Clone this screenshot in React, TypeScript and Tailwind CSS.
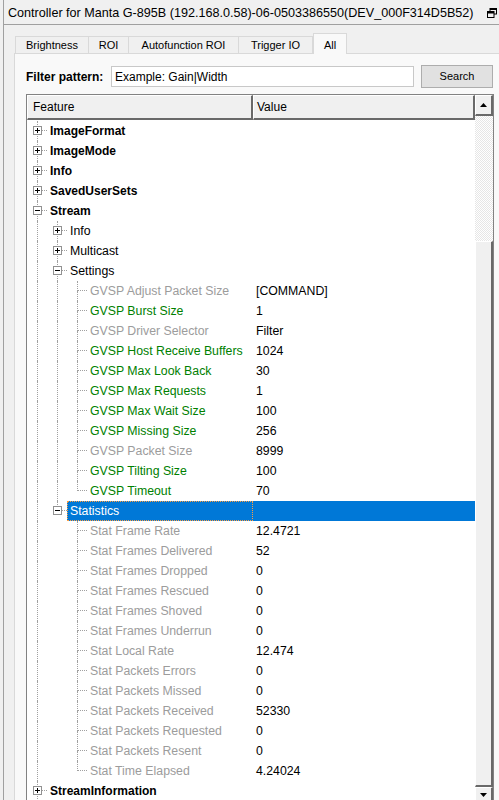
type Row = {
  label: string
  value?: string
  level: number
  group?: boolean
  open?: boolean
  last?: boolean
  guides: boolean[]
  tone: "bold" | "plain" | "green" | "gray"
  selected?: boolean
}

const gvsp: [string, string, boolean][] = [
  ["GVSP Adjust Packet Size", "[COMMAND]", false],
  ["GVSP Burst Size", "1", true],
  ["GVSP Driver Selector", "Filter", false],
  ["GVSP Host Receive Buffers", "1024", true],
  ["GVSP Max Look Back", "30", true],
  ["GVSP Max Requests", "1", true],
  ["GVSP Max Wait Size", "100", true],
  ["GVSP Missing Size", "256", true],
  ["GVSP Packet Size", "8999", false],
  ["GVSP Tilting Size", "100", true],
  ["GVSP Timeout", "70", true],
]

const stats: [string, string][] = [
  ["Stat Frame Rate", "12.4721"],
  ["Stat Frames Delivered", "52"],
  ["Stat Frames Dropped", "0"],
  ["Stat Frames Rescued", "0"],
  ["Stat Frames Shoved", "0"],
  ["Stat Frames Underrun", "0"],
  ["Stat Local Rate", "12.474"],
  ["Stat Packets Errors", "0"],
  ["Stat Packets Missed", "0"],
  ["Stat Packets Received", "52330"],
  ["Stat Packets Requested", "0"],
  ["Stat Packets Resent", "0"],
  ["Stat Time Elapsed", "4.24024"],
]

const rows: Row[] = [
  { label: "ImageFormat", level: 0, group: true, guides: [], tone: "bold" },
  { label: "ImageMode", level: 0, group: true, guides: [], tone: "bold" },
  { label: "Info", level: 0, group: true, guides: [], tone: "bold" },
  { label: "SavedUserSets", level: 0, group: true, guides: [], tone: "bold" },
  { label: "Stream", level: 0, group: true, open: true, guides: [], tone: "bold" },
  { label: "Info", level: 1, group: true, guides: [true], tone: "plain" },
  { label: "Multicast", level: 1, group: true, guides: [true], tone: "plain" },
  { label: "Settings", level: 1, group: true, open: true, guides: [true], tone: "plain" },
  ...gvsp.map(([label, value, on], i) => ({
    label,
    value,
    level: 2,
    last: i === gvsp.length - 1,
    guides: [true, true],
    tone: (on ? "green" : "gray") as Row["tone"],
  })),
  { label: "Statistics", level: 1, group: true, open: true, last: true, guides: [true], tone: "plain", selected: true },
  ...stats.map(([label, value], i) => ({
    label,
    value,
    level: 2,
    last: i === stats.length - 1,
    guides: [true, false],
    tone: "gray" as Row["tone"],
  })),
  { label: "StreamInformation", level: 0, group: true, guides: [], tone: "bold" },
]

const toneClass = {
  bold: "font-bold text-black text-[12px]",
  plain: "text-black",
  green: "text-[#008000]",
  gray: "text-[#9c9c9c]",
}

function ExpandBox({ open }: { open?: boolean }) {
  return (
    <svg className="absolute left-[6px] top-[5px]" width="9" height="9" viewBox="0 0 9 9">
      <rect x="0.5" y="0.5" width="8" height="8" fill="#fff" stroke="#919191" />
      <path d="M2 4.5h5" stroke="#000" />
      {!open && <path d="M4.5 2v5" stroke="#000" />}
    </svg>
  )
}

function Connector({ row }: { row: Row }) {
  return (
    <div className="relative h-[20px] w-[20px] shrink-0">
      <span className="absolute left-[10px] top-0 h-[10px] border-l border-dotted border-[#a0a0a0]" />
      {!row.last && (
        <span className="absolute left-[10px] top-[10px] h-[10px] border-l border-dotted border-[#a0a0a0]" />
      )}
      <span className="absolute left-[11px] top-[9px] w-[9px] border-t border-dotted border-[#a0a0a0]" />
      {row.group && <ExpandBox open={row.open} />}
    </div>
  )
}

function TreeRow({ row }: { row: Row }) {
  return (
    <div className="flex h-[20px] items-center text-[12.3px]">
      <div className="flex h-full w-[226px] shrink-0">
        {row.guides.map((g, i) => (
          <div key={i} className="relative h-[20px] w-[20px] shrink-0">
            {g && <span className="absolute left-[10px] top-0 h-[20px] border-l border-dotted border-[#a0a0a0]" />}
          </div>
        ))}
        <Connector row={row} />
        <div
          className={
            row.selected
              ? "flex flex-1 items-center bg-[#0078d7] pl-[3px] text-white outline-1 -outline-offset-1 outline-dotted outline-[#ff9e40]"
              : `flex flex-1 items-center whitespace-nowrap pl-[3px] ${toneClass[row.tone]}`
          }
        >
          {row.label}
        </div>
      </div>
      <div className={`flex h-full flex-1 items-center pl-[3px] text-black ${row.selected ? "bg-[#0078d7]" : ""}`}>
        {row.value}
      </div>
    </div>
  )
}

function Tab({ label, active, w }: { label: string; active?: boolean; w: string }) {
  return (
    <div
      className={
        active
          ? `relative -mb-px flex h-[21px] ${w} items-start justify-center border border-b-0 border-[#d9d9d9] bg-[#f9f9f9] pt-[3px] text-black`
          : `flex h-[17px] ${w} items-center justify-center border border-b-0 border-l-0 border-[#d9d9d9] first:border-l bg-[#f0f0f0] text-black`
      }
    >
      {label}
    </div>
  )
}

export default function App() {
  return (
    <div className="h-[800px] w-[499px] overflow-hidden bg-[#f0f0f0] font-['Liberation_Sans',Arial,sans-serif] text-[12px] text-black">
      <div className="ml-[3px] flex h-full flex-col border-l border-[#a0a0a0]">
        <div className="flex h-[25px] shrink-0 items-center justify-between border-b border-[#a0a0a0] pl-[4px] pr-[2px] pt-[2px]">
          <span className="whitespace-nowrap text-[12.6px]">
            Controller for Manta G-895B (192.168.0.58)-06-0503386550(DEV_000F314D5B52)
          </span>
          <svg width="10" height="10" viewBox="0 0 10 10">
            <rect x="3" y="0.5" width="6.5" height="5.5" fill="none" stroke="#000" />
            <path d="M3 1h7" stroke="#000" strokeWidth="2" />
            <rect x="0.5" y="3.5" width="6.5" height="6" fill="#f0f0f0" stroke="#000" />
            <path d="M0 4.5h7" stroke="#000" strokeWidth="2" />
          </svg>
        </div>

        <div className="flex flex-1 flex-col pl-[10px] pt-[8px]">
          <div className="flex h-[20px] items-end pl-px text-[11px]">
            <Tab label="Brightness" w="w-[74px]" />
            <Tab label="ROI" w="w-[40px]" />
            <Tab label="Autofunction ROI" w="w-[110px]" />
            <Tab label="Trigger IO" w="w-[74px]" />
            <Tab label="All" active w="w-[34px]" />
          </div>

          <div className="flex flex-1 flex-col border-l border-t border-[#d9d9d9] bg-[#f9f9f9] pl-[11px] pr-[5px] pt-[11px]">
            <div className="flex h-[23px] items-center">
              <span className="w-[85px] font-bold">Filter pattern:</span>
              <div className="flex h-[21px] w-[303px] items-center border border-[#c8c8c8] bg-white pl-[3px]">
                Example: Gain|Width
              </div>
              <button className="ml-[7px] h-[23px] w-[72px] border border-[#adadad] bg-[#e1e1e1] text-[11px]">
                Search
              </button>
            </div>

            <div className="mt-[6px] flex flex-1 flex-col overflow-hidden border-l border-r border-t border-[#828282] bg-white">
              <div className="flex">
                <div className="flex-1">
                  <div className="flex h-[25px] bg-[#f0f0f0]">
                    <div className="flex w-[226px] items-center border-b-2 border-r-2 border-l border-t border-b-[#696969] border-r-[#696969] border-l-white border-t-white pl-[5px]">
                      Feature
                    </div>
                    <div className="flex flex-1 items-center border-b-2 border-r-2 border-l border-t border-b-[#696969] border-r-[#696969] border-l-white border-t-white pl-[3px]">
                      Value
                    </div>
                  </div>
                  <div className="pt-px">
                    {rows.map((r, i) => (
                      <TreeRow key={i} row={r} />
                    ))}
                  </div>
                </div>
                <div className="flex w-[18px] shrink-0 flex-col">
                  <div className="flex h-[21px] items-center justify-center border-b-2 border-r-2 border-l border-t border-b-[#696969] border-r-[#696969] border-l-white border-t-white bg-[#f0f0f0]">
                    <svg width="7" height="4" viewBox="0 0 7 4">
                      <path d="M3.5 0L7 4H0z" fill="#000" />
                    </svg>
                  </div>
                  <div className="h-[125px] bg-[repeating-conic-gradient(#e6e6e6_0_25%,#ffffff_0_50%)] bg-[length:2px_2px]" />
                  <div className="h-[546px] border-b-2 border-r-2 border-l border-t border-b-[#696969] border-r-[#696969] border-l-white border-t-white bg-[#f0f0f0]" />
                  <div className="flex h-[21px] items-start justify-center border-r-2 border-l border-t border-r-[#696969] border-l-white border-t-white bg-[#f0f0f0] pt-[5px]">
                    <svg width="7" height="4" viewBox="0 0 7 4">
                      <path d="M0 0H7L3.5 4z" fill="#000" />
                    </svg>
                  </div>
                </div>
              </div>
            </div>
          </div>
        </div>
      </div>
    </div>
  )
}
